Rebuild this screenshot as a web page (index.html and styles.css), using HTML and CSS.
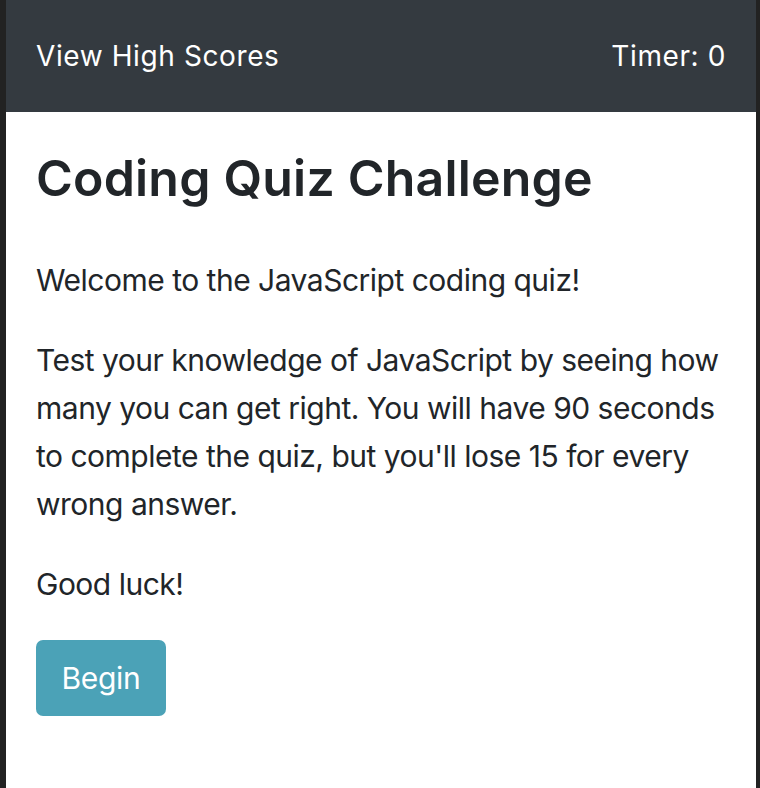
FILE: index.html
```html
<!DOCTYPE html>
<html lang="en">
<head>
<meta charset="utf-8">
<title>Coding Quiz Challenge</title>
<link rel="stylesheet" href="styles.css">
</head>
<body>
<div class="page">
  <header class="topbar">
    <a class="scores" href="#">View High Scores</a>
    <span class="timer">Timer: 0</span>
  </header>
  <main class="content">
    <h1 class="title">Coding Quiz Challenge</h1>
    <p class="text">Welcome to the JavaScript coding quiz!</p>
    <p class="text">Test your knowledge of JavaScript by seeing how many you can get right. You will have 90 seconds to complete the quiz, but you'll lose 15 for every wrong answer.</p>
    <p class="text">Good luck!</p>
    <button class="begin" type="button">Begin</button>
  </main>
</div>
</body>
</html>
```
FILE: styles.css
```css
html, body {
  margin: 0;
  padding: 0;
  height: 100%;
}
body {
  background: #222222;
  font-family: Inter, "Noto Sans", sans-serif;
  color: #212529;
}
.page {
  margin: 0 4px 0 6px;
  min-height: 100%;
  background: #ffffff;
  display: flex;
  flex-direction: column;
}
.topbar {
  height: 112px;
  background: #343a40;
  display: flex;
  align-items: center;
  justify-content: space-between;
  padding: 0 30px;
  box-sizing: border-box;
}
.scores, .timer {
  color: #ffffff;
  font-size: 28px;
  text-decoration: none;
  letter-spacing: 0.6px;
}
.content {
  padding: 36px 30px 0 30px;
}
.title {
  margin: 0 0 48px 0;
  font-size: 50px;
  font-weight: 600;
  line-height: 60px;
  letter-spacing: 0.2px;
}
.text {
  margin: 0 0 32px 0;
  font-size: 30px;
  line-height: 48px;
  letter-spacing: -0.5px;
}
.begin {
  margin-top: 0;
  width: 130px;
  height: 76px;
  background: #4ba2b7;
  color: #ffffff;
  border: none;
  border-radius: 7px;
  font-family: inherit;
  font-size: 30px;
  letter-spacing: -0.3px;
  padding: 0;
}
```
